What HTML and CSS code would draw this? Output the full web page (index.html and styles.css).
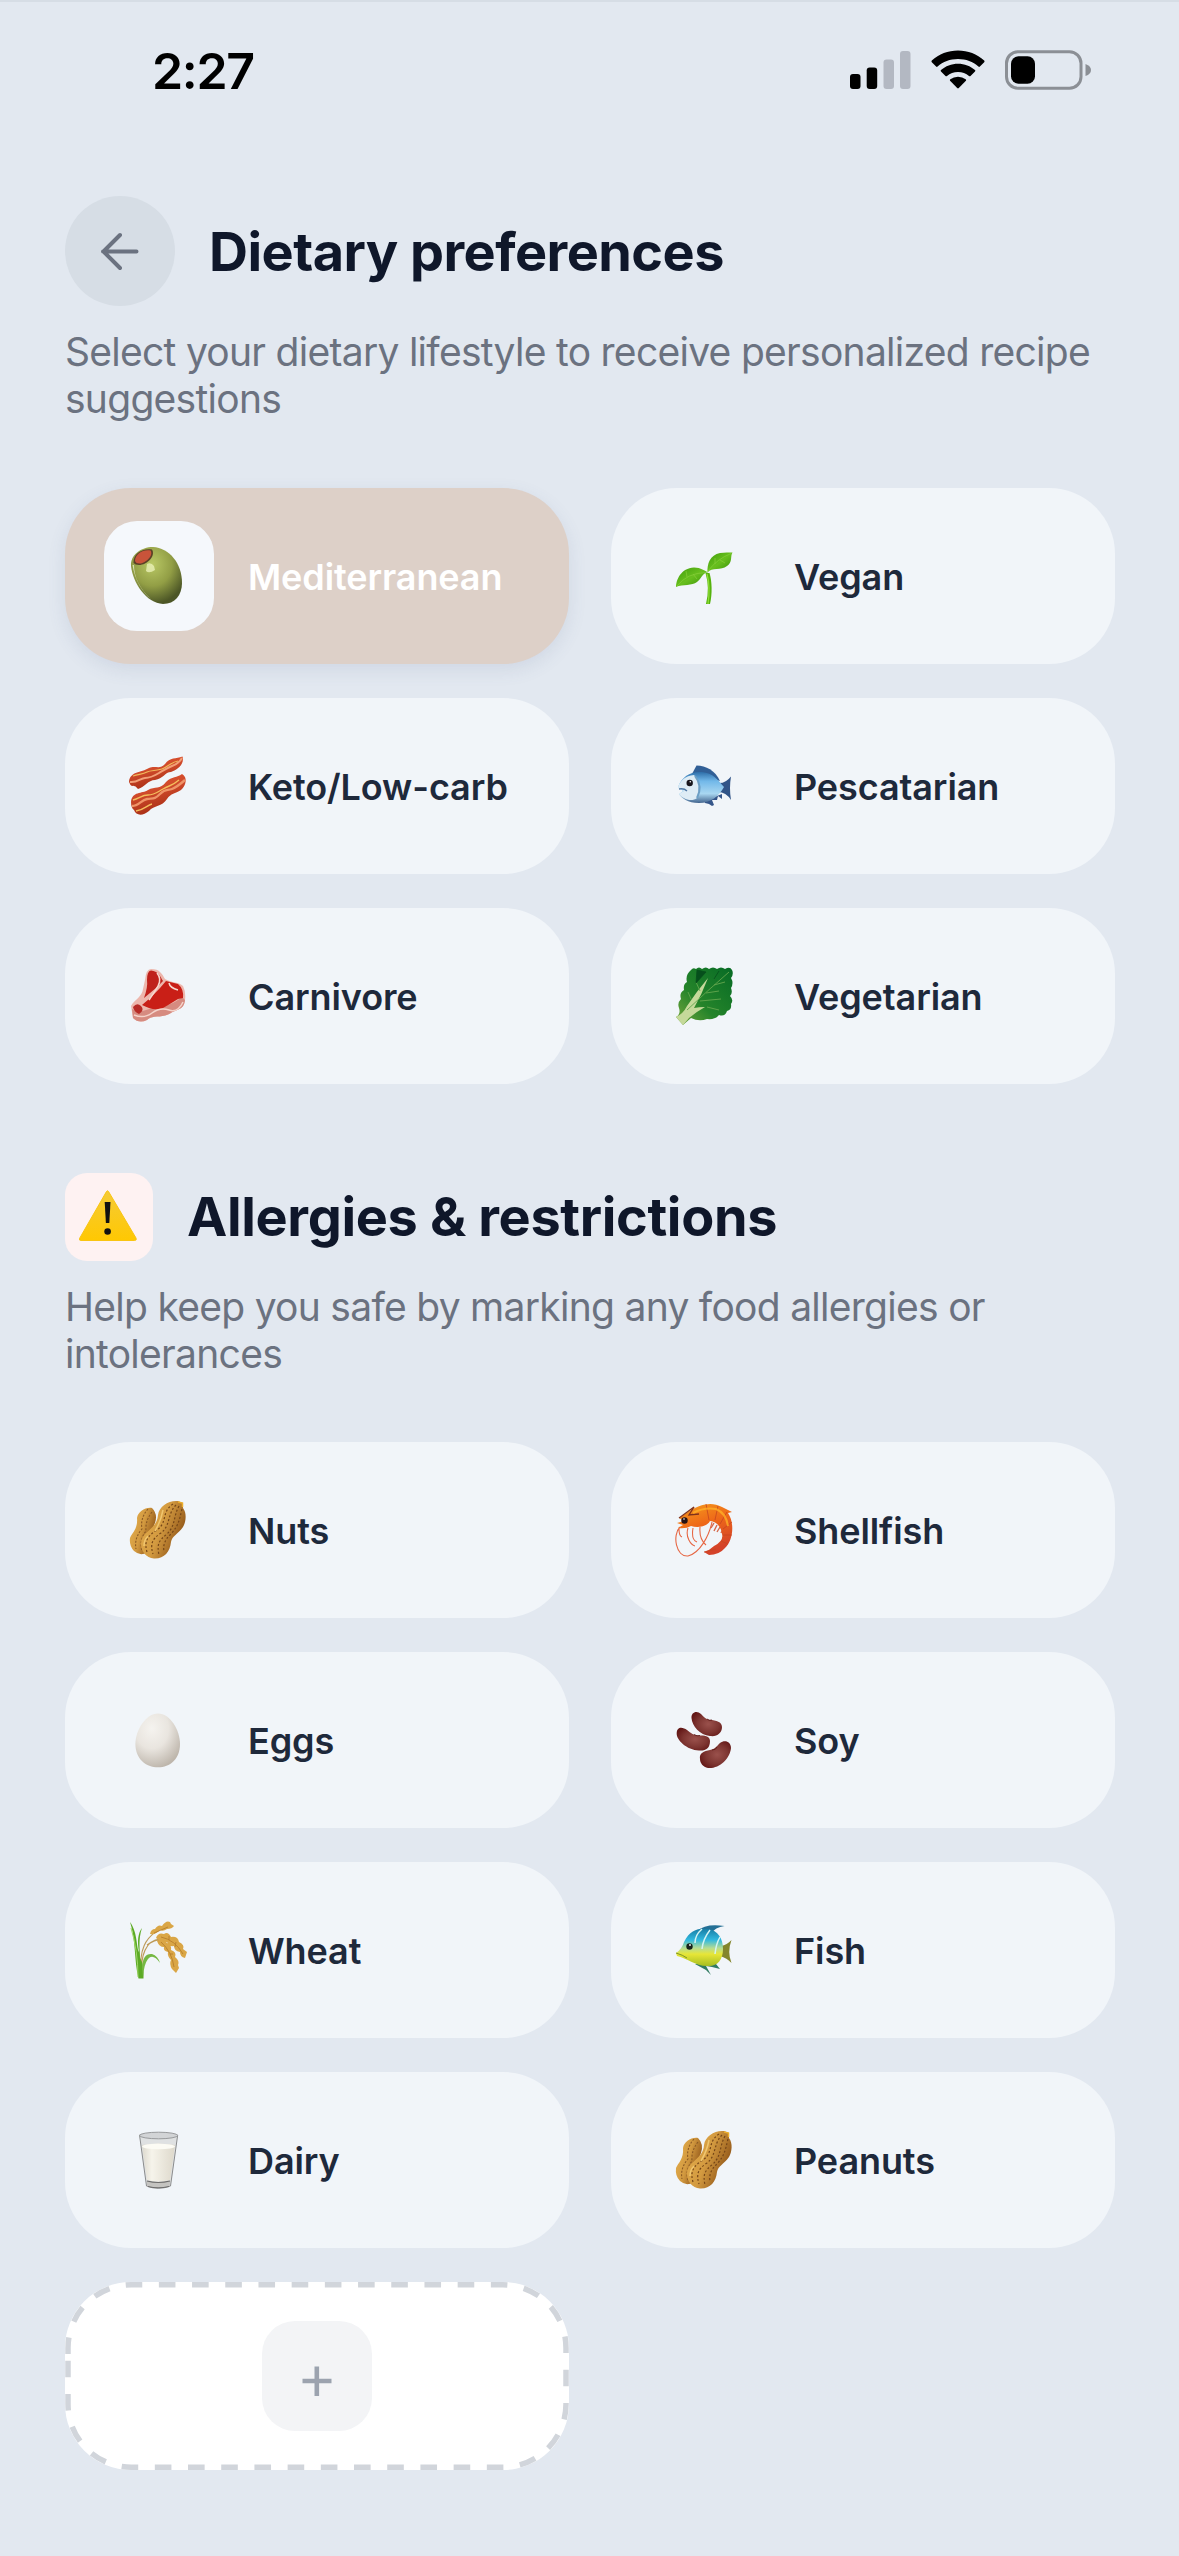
FILE: index.html
```html
<!DOCTYPE html>
<html lang="en">

<head>
    <meta charset="UTF-8">
    <meta name="viewport" content="width=device-width, initial-scale=1.0">
    <title>Dietary preferences</title>
    <link rel="stylesheet" href="styles.css">
</head>

<body>

    <div class="status-bar">
        <span class="time">2:27</span>
        <div class="status-icons">
            <svg width="61" height="40" viewBox="0 0 61 40">
                <rect x="0" y="24" width="10.5" height="15" rx="3" />
                <rect x="16.7" y="17.5" width="10.5" height="21.5" rx="3" />
                <rect x="33.5" y="9.5" width="10.5" height="29.5" rx="3" fill="#b3b8c2" />
                <rect x="50" y="1" width="10.5" height="38" rx="3" fill="#b3b8c2" />
            </svg>
            <svg class="wifi" width="54" height="40" viewBox="0 0 54 40">
                <path d="M.8 12.2Q0 11.4.8 10.6C8 4 17 .6 27 .6S46 4 53.2 10.6Q54 11.4 53.2 12.2L48.9 16.6Q48.2 17.3 47.4 16.6C42 11.7 35 9 27 9S12 11.700 6.600 16.600Q5.800 17.300 5.100 16.600Z" />
                <path d="M10 21.500Q9.200 20.700 10 20C14.500 16 20.500 13.700 27 13.700S39.500 16 44 20Q44.800 20.700 44 21.500L39.500 26Q38.800 26.700 38 26C35 23.500 31.200 22 27 22S19 23.500 16 26Q15.200 26.700 14.500 26Z" />
                <path d="M19.100 30.800Q18.400 30 19.300 29.300Q22.600 26.800 27 26.800T34.700 29.300Q35.600 30 34.900 30.800L27.800 38.100Q27 38.900 26.200 38.100Z" />
            </svg>
            <svg width="87" height="40" viewBox="0 0 87 40">
                <rect x="1.5" y="1.7" width="74.5" height="36.5" rx="11.5" fill="none" stroke="#8b8f95" stroke-width="3" />
                <rect x="6" y="6.3" width="24" height="27.4" rx="7.5" />
                <path d="M80.500 14Q86 16 86 20T80.500 26Z" fill="#8b8f95" />
            </svg>
        </div>
    </div>

    <div class="container">

        <div class="section">
            <div class="title-row">
                <div class="back-button">
                    <svg width="110" height="110" viewBox="0 0 110 110">
                        <path d="M71.500 55.500H38M55 39L38.500 55.500L55 72" fill="none" stroke="#6b7280" stroke-width="4" stroke-linecap="round" stroke-linejoin="round" />
                    </svg>
                </div>
                <h1>Dietary preferences</h1>
            </div>
            <p class="desc">Select your dietary lifestyle to receive personalized recipe suggestions</p>

            <div class="options">
                <div class="option selected">
                    <div class="icon">
                        <svg viewBox="0 0 60 60">
                            <defs>
                                <radialGradient id="olive" cx=".42" cy=".3" r=".7">
                                    <stop offset="0" stop-color="#b9c865" />
                                    <stop offset=".55" stop-color="#929e45" />
                                    <stop offset="1" stop-color="#4c5626" />
                                </radialGradient>
                            </defs>
                            <path d="M2 20C1 9 12 1 24 1C40 2 53 17 53 37C53 49 46 58 34 58C17 57 4 37 2 20Z" fill="url(#olive)" />
                            <path d="M3.500 19C6 34 13 46 22 53C11 43 5 31 5 19Z" fill="#d5deb0" />
                            <path d="M4.500 17C4 8 13 2 23 3.500C27 10 18 19 10 19Q6 19 4.500 17Z" fill="#5b4127" />
                            <path d="M6 15C6 8 14 3 21.500 4.500C25 10 16 17.500 10.500 17.500Q7 17.500 6 15Z" fill="#c9543a" />
                            <path d="M18 18Q22 16 25 20L26 24Q20 28 17 25Z" fill="#eef4bd" opacity=".75" />
                        </svg>
                    </div>
                    <span class="label">Mediterranean</span>
                </div>
                <div class="option">
                    <div class="icon">
                        <svg viewBox="0 0 60 60">
                            <defs>
                                <linearGradient id="leaf" x1="0" y1="0" x2="1" y2="1">
                                    <stop offset="0" stop-color="#3f9d0b" />
                                    <stop offset=".5" stop-color="#68bf1e" />
                                    <stop offset="1" stop-color="#338c06" />
                                </linearGradient>
                            </defs>
                            <path d="M30.500 27L34.500 27C37 35 37.500 48 35 58H31Q35 42 30.500 27Z" fill="#56b30e" />
                            <path d="M32 28Q35.500 41 33 58" fill="none" stroke="#8fdd38" stroke-width="1.3" />
                            <path d="M1 41C1 34 6 22 19 21.500C26 21.500 30 25 33 26.500C28 26 27 32 22 36C17 40 8 38 1 41Z" fill="url(#leaf)" />
                            <path d="M32.500 26.500C32 18 35 9 45 7C50 6 54 6.500 57.500 6.500C55 10 58 16 52 20C46 25 37 21 32.500 26.500Z" fill="url(#leaf)" />
                            <path d="M2 40Q12 27 31 26.500M33 25Q42 13 56 7.500M12 31L11 25M18 28L22 33M40 18L40 12M45 14L50 17" fill="none" stroke="#86cf3b" stroke-width=".7" />
                        </svg>
                    </div>
                    <span class="label">Vegan</span>
                </div>
                <div class="option">
                    <div class="icon">
                        <svg viewBox="0 0 60 60">
                            <defs>
                                <linearGradient id="bacon" x1="0" y1="0" x2=".4" y2="1">
                                    <stop offset="0" stop-color="#e2552f" />
                                    <stop offset=".5" stop-color="#cf4a2b" />
                                    <stop offset="1" stop-color="#a62d14" />
                                </linearGradient>
                            </defs>
                            <path d="M0 26C1 15 12 17 20 12C26 9 31 14 36 8C41 1 47 3 53.500 .5C56 8 48 14 42 16C36 16 34 23 26 24C19 24 16 31 9 33Q6 29 3 30Q1 29 0 26Z" fill="url(#bacon)" />
                            <path d="M1 26C8 27 12 22 16 22S25 20 30 17S38 12 43 10S51 6 53 2" fill="none" stroke="#f2a078" stroke-width="2" />
                            <path d="M4 20C11 18 14 18 18 16S27 15 33 13S42 6 49 5" fill="none" stroke="#f0ba5b" stroke-width="1.2" />
                            <path d="M2 46C3 35 13 38 19 34C26 30 31 34 37 26C43 20 48 22 53 18C59 21 57 30 52 34C46 38 42 37 38 43C33 51 25 49 20 55C14 60 7 60 5 54Q2 52 2 46Z" fill="url(#bacon)" />
                            <path d="M3 50C10 50 12 44 18 43S25 44 31 38S38 35 43 33S50 29 56 24" fill="none" stroke="#ef9468" stroke-width="2.3" />
                            <path d="M4 44C11 42 13 39 19 39S27 37 34 33S43 30 50 24M7 55C15 54 18 49 23 48" fill="none" stroke="#f3bd5c" stroke-width="1.4" />
                        </svg>
                    </div>
                    <span class="label">Keto/Low-carb</span>
                </div>
                <div class="option">
                    <div class="icon">
                        <svg viewBox="0 0 60 60">
                            <defs>
                                <linearGradient id="fishBody" x1="0" y1="0" x2="0" y2="1">
                                    <stop offset="0" stop-color="#2d6da8" />
                                    <stop offset=".3" stop-color="#72b8e9" />
                                    <stop offset=".7" stop-color="#a9d7f1" />
                                    <stop offset="1" stop-color="#42648e" />
                                </linearGradient>
                            </defs>
                            <path d="M17 18L21.500 9.500C31 10 40 14 45 25Z" fill="#315f96" />
                            <path d="M29 45L30 47L34 48L37 50L39 49L37 44L42 44L43 40L47 43V38Z" fill="#35568a" />
                            <path d="M43 27Q50 28 56 20.500Q54 32 56 44Q51 36 43 36Z" fill="#315487" />
                            <path d="M3 31C7 20 16 15 27 16C38 17 43 24 49 31C44 40 36 47 24 47C13 47 6 42 4 38L8 35Z" fill="url(#fishBody)" />
                            <path d="M3 31C6 24 10 20 19 19Q28 29 22 42C16 47 7 42 4 38L9 35Z" fill="#deecf5" />
                            <path d="M20 20Q28 30 22 42" fill="none" stroke="#6d9fc5" stroke-width="2" />
                            <path d="M4 33Q9 32 12 35" fill="none" stroke="#4e78a5" stroke-width="1.3" />
                            <circle cx="14.7" cy="27" r="3.2" fill="#17151c" />
                            <circle cx="15.3" cy="25.7" r=".8" fill="#fff" />
                        </svg>
                    </div>
                    <span class="label">Pescatarian</span>
                </div>
                <div class="option">
                    <div class="icon">
                        <svg viewBox="0 0 60 60">
                            <path d="M16 14Q17 3 22 3C31 3 33 8 36 13C43 17 50 16 54 20Q57 26 56 34C55 44 48 43 42 47C33 53 24 48 18 54Q10 58 4 52L2 40C6 33 13 31 14 23Z" fill="#edb7ad" />
                            <path d="M3 43Q9 47 17 44T34 40T53 31L56 34C55 44 48 43 42 47C33 53 24 48 18 54Q10 58 4 52Z" fill="#d68b80" />
                            <path d="M18 14Q18 5 22 4.500C29 5 31 10 34 15L27 22L15 32Q19 21 18 14Z" fill="#bf211b" />
                            <path d="M31 22L37 15L49 18Q55 23 54 32L49 33Q41 38 34 42C27 45 19 42 13 39Q23 31 31 22Z" fill="#c91f17" />
                            <path d="M4 41Q8 36 12 40T10 48Q5 46 4 41Z" fill="#b72b26" />
                            <path d="M28 7Q33 13 29 20T20 34M40 17Q41 22 49 24" fill="none" stroke="#f7d7cf" stroke-width="1.5" />
                            <path d="M5 49Q15 53 23 47T40 44T54 36" fill="none" stroke="#f5d3ca" stroke-width="1.5" />
                        </svg>
                    </div>
                    <span class="label">Carnivore</span>
                </div>
                <div class="option">
                    <div class="icon">
                        <svg viewBox="0 0 60 60">
                            <defs>
                                <linearGradient id="lettuce" x1="0" y1="1" x2="1" y2="0">
                                    <stop offset="0" stop-color="#78a83d" />
                                    <stop offset=".4" stop-color="#25842a" />
                                    <stop offset="1" stop-color="#076b25" />
                                </linearGradient>
                            </defs>
                            <path d="M16 4Q18 1 21 3Q24 0 27 3Q31 0 34 3Q38 0 42 3Q46 0 50 3Q55 0 57 4Q59 8 56 12Q59 17 56 22Q58 27 55 30Q59 34 56 38Q57 44 52 45Q50 51 44 49Q40 54 32 53Q24 56 16 52L8 59L1 51Q6 48 4 42Q2 37 6 33Q4 27 9 24Q8 18 12 16Q10 9 16 4Z" fill="url(#lettuce)" />
                            <path d="M1 51Q8 48 12 40Q22 25 33 12Q27 28 19 42Q24 41 30 41Q21 46 14 52L8 59Z" fill="#c5d99a" />
                            <path d="M12 44Q31 26 54 6M16 33L13 26M25 25L21 16M31 27L44 25M25 35L46 33M39 19L50 16M32 41L44 44" fill="none" stroke="#64a64e" stroke-width=".9" />
                            <path d="M22 4L21 17L31 6ZM44 5L39 13" fill="#064f1c" stroke="#064f1c" stroke-width=".8" />
                        </svg>
                    </div>
                    <span class="label">Vegetarian</span>
                </div>
            </div>
        </div>

        <div class="section">
            <div class="title-row">
                <div class="warning">
                    <svg width="88" height="88" viewBox="0 0 88 88">
                        <defs>
                            <linearGradient id="warn" x1="0" y1="0" x2="0" y2="1">
                                <stop offset="0" stop-color="#f5cb37" />
                                <stop offset="1" stop-color="#ffc802" />
                            </linearGradient>
                        </defs>
                        <path d="M41.500 18.500Q42.500 17 43.500 18.500L71 65Q72 67.500 69.500 67.500H16Q13.500 67.500 14.800 65Z" fill="url(#warn)" stroke="#f9c512" stroke-width="1" stroke-linejoin="round" />
                        <path d="M39.700 29H45.500L44.300 50H40.900Z" fill="#111" />
                        <circle cx="42.6" cy="58.5" r="3.3" fill="#111" />
                    </svg>
                </div>
                <h2>Allergies &amp; restrictions</h2>
            </div>
            <p class="desc">Help keep you safe by marking any food allergies or intolerances</p>

            <div class="options">
                <div class="option">
                    <div class="icon">
                        <svg viewBox="0 0 60 60">
                            <defs>
                                <linearGradient id="nut" x1="0" y1="0" x2="1" y2=".5">
                                    <stop offset="0" stop-color="#e6b14f" />
                                    <stop offset=".55" stop-color="#d39a40" />
                                    <stop offset="1" stop-color="#8f5417" />
                                </linearGradient>
                                <!-- shared by the nuts and peanuts options -->
                                <g id="peanut">
                                    <path d="M8 18C9 12 16 7 23 8Q29 14 26 23C22 30 25 42 18 52Q12 57 5 51Q0 46 1 38C3 33 9 29 8 18Z" fill="url(#nut)" />
                                    <path d="M19 9Q11 18 13 29Q5 38 7 49M23 12Q16 21 17 31Q10 40 13 51" fill="none" stroke="#8a5924" stroke-width="1.1" stroke-dasharray="2 1.5" />
                                    <path d="M29 15C30 6 40 0 49 1L54 3V8C58 13 57 22 54 27C49 34 43 36 42 42C41 52 35 59 25 58.500C17 58 12 51 12 44C12 31 28 30 29 15Z" fill="url(#nut)" />
                                    <path d="M44 4C32 12 39 22 28 30C18 36 15 42 18 52M47 5C38 14 42 25 32 33C23 39 21 44 24 54M50 6C44 17 47 25 38 34C29 41 28 45 30 55M53 9C50 22 49 26 42 34C35 40 34 47 35 51" fill="none" stroke="#754618" stroke-width="1.2" stroke-dasharray="2 2" />
                                    <path d="M34 10Q32 21 26 31M19 36Q15 40 15 46" fill="none" stroke="#f0c66f" stroke-width="1.5" />
                                    <path d="M49 2L53.500 3V7" fill="none" stroke="#edae2b" stroke-width="1.5" />
                                </g>
                            </defs>
                            <use href="#peanut" />
                        </svg>
                    </div>
                    <span class="label">Nuts</span>
                </div>
                <div class="option">
                    <div class="icon">
                        <svg viewBox="0 0 60 60">
                            <defs>
                                <linearGradient id="shrimp" x1="0" y1="0" x2=".4" y2="1">
                                    <stop offset="0" stop-color="#f6a01d" />
                                    <stop offset=".5" stop-color="#ee6819" />
                                    <stop offset="1" stop-color="#d44229" />
                                </linearGradient>
                            </defs>
                            <path d="M5 27C-3 35 1 57 13 56C25 53 34 36 37 22M4 29Q4 36 7 37M13 28C10 37 16 45 20 46M18 28Q16 40 22 42M25 27Q24 39 31 45" fill="none" stroke="#e66643" stroke-width="1.1" />
                            <path d="M39 23L36 28M42 25L39 31M45 27L42 32M48 29L46 33" fill="none" stroke="#d5694c" stroke-width="1.4" />
                            <path d="M2 23L9 21L4 18L16 10C25 5 36 1 47 7L57 12L53 13C60 23 58 41 50 48Q44 55 34 55L29 52Q35 50 39 46Q49 41 47 34C47 29 42 21 35 21C32 27 22 28 16 26Q11 29 3 28L8 25Z" fill="url(#shrimp)" />
                            <path d="M4 18L19 7L14 15L24 14" fill="none" stroke="#7e321c" stroke-width="1.3" />
                            <path d="M31 4L34 20M43 6L40 20M52 12L45 24M57 22L48 29M57 35L48 35M53 44L46 41M29 52L41 49" fill="none" stroke="#c7451f" stroke-width=".8" />
                            <path d="M18 13Q29 7 41 9Q51 13 53 26" fill="none" stroke="#ffb328" stroke-width="2" opacity=".75" />
                            <circle cx="9.5" cy="20.5" r="3.2" fill="#261315" />
                            <circle cx="9" cy="19" r=".8" fill="#fff" />
                        </svg>
                    </div>
                    <span class="label">Shellfish</span>
                </div>
                <div class="option">
                    <div class="icon">
                        <svg viewBox="0 0 60 60">
                            <defs>
                                <radialGradient id="egg" cx=".37" cy=".28" r=".75">
                                    <stop offset="0" stop-color="#f5f3ef" />
                                    <stop offset=".5" stop-color="#e9e5df" />
                                    <stop offset="1" stop-color="#beb6ac" />
                                </radialGradient>
                            </defs>
                            <path d="M29 3.500C41 3.500 51 20 51 34C51 49 41 57.300 29 57.300S6.400 49 6.400 34C6.400 20 17 3.500 29 3.500Z" fill="url(#egg)" />
                        </svg>
                    </div>
                    <span class="label">Eggs</span>
                </div>
                <div class="option">
                    <div class="icon">
                        <svg viewBox="0 0 60 60">
                            <defs>
                                <radialGradient id="bean" cx=".55" cy=".5" r=".6">
                                    <stop offset="0" stop-color="#9a514c" />
                                    <stop offset=".6" stop-color="#7d3531" />
                                    <stop offset="1" stop-color="#641817" />
                                </radialGradient>
                            </defs>
                            <path d="M16.500 8C16 2 22 0 26 4C29 7 31 9.500 35 10C41 10 47 12 47 17C47 23 42 27 35 26C25 25 17 16 16.500 8Z" fill="url(#bean)" />
                            <path d="M1.700 23C2 16 8 17 12 20C16 23 19 25.500 23 25.500C30 25 35 26 35 31C35 38 31 41 24 40.500C12 40 1 30 1.700 23Z" fill="url(#bean)" />
                            <path d="M25 49C24 43 29 41 35 40C40 39 42 36 45 33C50 29 56 32 56 38C55 49 44 59 33 58C28 57 25 53 25 49Z" fill="url(#bean)" />
                            <path d="M32 9Q34 11 37 10M19 24.500Q22 26.500 25 25.500M37 40Q41 40 42 37" fill="none" stroke="#54110f" stroke-width=".8" />
                        </svg>
                    </div>
                    <span class="label">Soy</span>
                </div>
                <div class="option">
                    <div class="icon">
                        <svg viewBox="0 0 60 60">
                            <path d="M12 56C10 34 13 13 41 6M13 55C11 36 17 20 31 19M18 25Q38 11 54 34M28 20Q43 26 46 50" fill="none" stroke="#bd9a57" stroke-width="1.2" />
                            <path d="M9.500 58.500C5 40 7 20 1 2C9 13 7 27 10 32C8 21 9 13 13 8C9 20 11 29 11 38Q15 44 14.500 58.500Z" fill="#5caa25" />
                            <path d="M13 47Q14 33 23 34Q29 36 31 43Q24 33 19 39Q15 44 14 57" fill="#76b844" />
                            <path d="M9 57Q9 31 2 8" fill="none" stroke="#a0d767" stroke-width="1" />
                            <path d="M21 14Q22 9 26 9Q29 4 33 6Q37 0 41 2L42 4L45 6Q43 9 38 9Q34 12 31 10Q27 15 21 14ZM27 18Q29 12 35 14Q39 11 42 17Q49 16 50 22Q56 25 54 29L58 32L56 38Q51 37 51 32Q45 31 45 26Q40 27 38 22Q33 23 27 18ZM28 21Q34 17 38 23Q43 25 42 30Q48 32 46 37Q51 41 49 45L50 48L47 53L43 49Q40 44 42 40Q38 36 39 32Q34 31 35 27Q30 27 28 21Z" fill="#daa646" />
                            <path d="M25 13L39 7M32 17Q46 20 54 34M32 22Q43 32 45 47M40 16L40 20M47 22L46 27M44 34L41 34" fill="none" stroke="#b37a2a" stroke-width=".8" />
                        </svg>
                    </div>
                    <span class="label">Wheat</span>
                </div>
                <div class="option">
                    <div class="icon">
                        <svg viewBox="0 0 60 60">
                            <defs>
                                <linearGradient id="tropical" x1="0" y1="0" x2="0" y2="1">
                                    <stop offset="0" stop-color="#187da5" />
                                    <stop offset=".3" stop-color="#31b9df" />
                                    <stop offset=".52" stop-color="#b7dd92" />
                                    <stop offset=".68" stop-color="#e7e637" />
                                    <stop offset="1" stop-color="#a6bd20" />
                                </linearGradient>
                            </defs>
                            <path d="M22 11Q31 3 49.500 6Q40 7 36 14Z" fill="#246f95" />
                            <path d="M20 44L31 50L36 55L31 46L37 47L45 49L41 44Z" fill="#317b61" />
                            <path d="M46 26Q52 25 56.500 20Q52 32 56.500 43Q52 38 45 36Z" fill="#84852b" />
                            <path d="M1 33Q7 29 9 22C15 10 23 8 33 9C43 10 48 19 48 29C48 40 42 47 32 46C20 46 12 38 2 36Z" fill="url(#tropical)" />
                            <path d="M27 9Q20 15 20 23M35 10Q28 19 27 29M45 17Q41 24 40 34" fill="none" stroke="#d4f4f3" stroke-width="1.5" />
                            <circle cx="14.5" cy="26.5" r="3.2" fill="#17231c" />
                            <circle cx="15" cy="25" r=".9" fill="#fff" />
                            <path d="M1 33Q8 35 12 38" fill="none" stroke="#7b9427" stroke-width="1" />
                        </svg>
                    </div>
                    <span class="label">Fish</span>
                </div>
                <div class="option">
                    <div class="icon">
                        <svg viewBox="0 0 60 60">
                            <defs>
                                <linearGradient id="milk" x1="0" y1="0" x2="1" y2="0">
                                    <stop offset="0" stop-color="#dcd9ce" />
                                    <stop offset=".3" stop-color="#f6f4eb" />
                                    <stop offset="1" stop-color="#ddd8cb" />
                                </linearGradient>
                            </defs>
                            <path d="M10.500 5L17.500 56Q29 60.500 41.500 56L48.700 5Z" fill="#dfe1e2" stroke="#8a8b8c" stroke-width="1" />
                            <path d="M13 15Q29 12 46 15L41 50Q29 53 18 50Z" fill="url(#milk)" />
                            <ellipse cx="29.5" cy="16.5" rx="16.5" ry="2.8" fill="#fcfbf4" />
                            <ellipse cx="29.6" cy="5.5" rx="19" ry="3.3" fill="#d2d4d6" stroke="#989a9c" stroke-width="1" />
                            <path d="M18 51Q29 54 41 51L40.800 56Q29 59.500 18 56Z" fill="#c4c3c0" />
                            <path d="M18 51Q29 54 41 51M19 56.500Q29 59 40 56.500" fill="none" stroke="#6d6c6b" stroke-width="1.2" />
                        </svg>
                    </div>
                    <span class="label">Dairy</span>
                </div>
                <div class="option">
                    <div class="icon">
                        <svg viewBox="0 0 60 60">
                            <use href="#peanut" />
                        </svg>
                    </div>
                    <span class="label">Peanuts</span>
                </div>
                <div class="add-option">
                    <svg class="dashes" viewBox="0 0 503.5 188">
                        <path d="M2.750 72V66A63.250 63.250 0 0 1 66 2.750H437.500A63.250 63.250 0 0 1 500.750 66V122A63.250 63.250 0 0 1 437.500 185.250H66A63.250 63.250 0 0 1 2.750 122Z" />
                    </svg>
                    <div class="add-icon">
                        <svg width="110" height="110" viewBox="0 0 110 110">
                            <path d="M40.500 60H69.500M54.800 45.500V75" fill="none" stroke="#9ca3af" stroke-width="4.6" />
                        </svg>
                    </div>
                </div>
            </div>
        </div>

    </div>

</body>

</html>
```

FILE: styles.css
```css
* {
    box-sizing: border-box;
}

body {
    margin: 0;
    min-height: 2556px;
    background-color: #e2e8f0;
    border-top: 2px solid #d6dde5;
    font-family: Inter, "Liberation Sans", sans-serif;
}

svg {
    display: block;
}

/* status bar */
.status-bar {
    display: flex;
    justify-content: space-between;
    align-items: center;
    height: 136px;
    padding: 0 87px 0 152px;
}

.time {
    padding-top: 2px;
    font-size: 50px;
    font-weight: 600;
    letter-spacing: -1.3px;
    color: #000;
}

.status-icons {
    display: flex;
    gap: 20px;
}

.container {
    padding: 58px 64px 0 65px;
}

.section {
    margin-bottom: 89px;
}

.title-row {
    display: flex;
    align-items: center;
    gap: 34px;
}

.back-button {
    width: 110px;
    height: 110px;
    border-radius: 50%;
    background-color: #d6dde5;
}

.warning {
    width: 88px;
    height: 88px;
    border-radius: 22px;
    background-color: #fef2f2;
}

h1,
h2 {
    margin: 0;
    padding-top: 2px;
    font-size: 54px;
    font-weight: 700;
    line-height: 66px;
    letter-spacing: -0.55px;
    color: #0f172a;
}

h2 {
    padding-top: 1px;
    letter-spacing: -0.35px;
}

.desc {
    margin: 22px 0 65.5px;
    font-size: 39px;
    line-height: 47px;
    letter-spacing: -0.72px;
    color: #6b7280;
}

/* option cards */
.options {
    display: grid;
    grid-template-columns: 504px 504px;
    column-gap: 42px;
    row-gap: 34px;
}

.option {
    display: flex;
    align-items: center;
    gap: 34px;
    height: 176px;
    padding-left: 39px;
    border-radius: 66px;
    background-color: #f1f5f9;
}

.icon {
    display: flex;
    align-items: center;
    justify-content: center;
    width: 110px;
    height: 110px;
    border-radius: 33px;
}

.icon svg {
    width: 60px;
    height: 60px;
}

.label {
    padding-top: 2px;
    font-size: 36px;
    font-weight: 600;
    letter-spacing: -0.1px;
    color: #1e293b;
}

.selected {
    background-color: #ddd0c8;
    box-shadow: 0 6px 18px rgba(80, 100, 140, 0.12);
}

.selected .icon {
    background-color: #f5f8fc;
}

.selected .label {
    color: #fff;
}

.add-option {
    position: relative;
    display: flex;
    align-items: center;
    justify-content: center;
    height: 188px;
    border-radius: 66px;
    background-color: #fff;
}

/* dashed outline over the card */
.dashes {
    position: absolute;
    inset: 0;
    width: 100%;
    height: 100%;
    fill: none;
    stroke: #d1d5db;
    stroke-width: 5.5px;
    stroke-dasharray: 16.6 16.6;
}

.add-icon {
    width: 110px;
    height: 110px;
    border-radius: 33px;
    background-color: #f3f4f6;
}
```
